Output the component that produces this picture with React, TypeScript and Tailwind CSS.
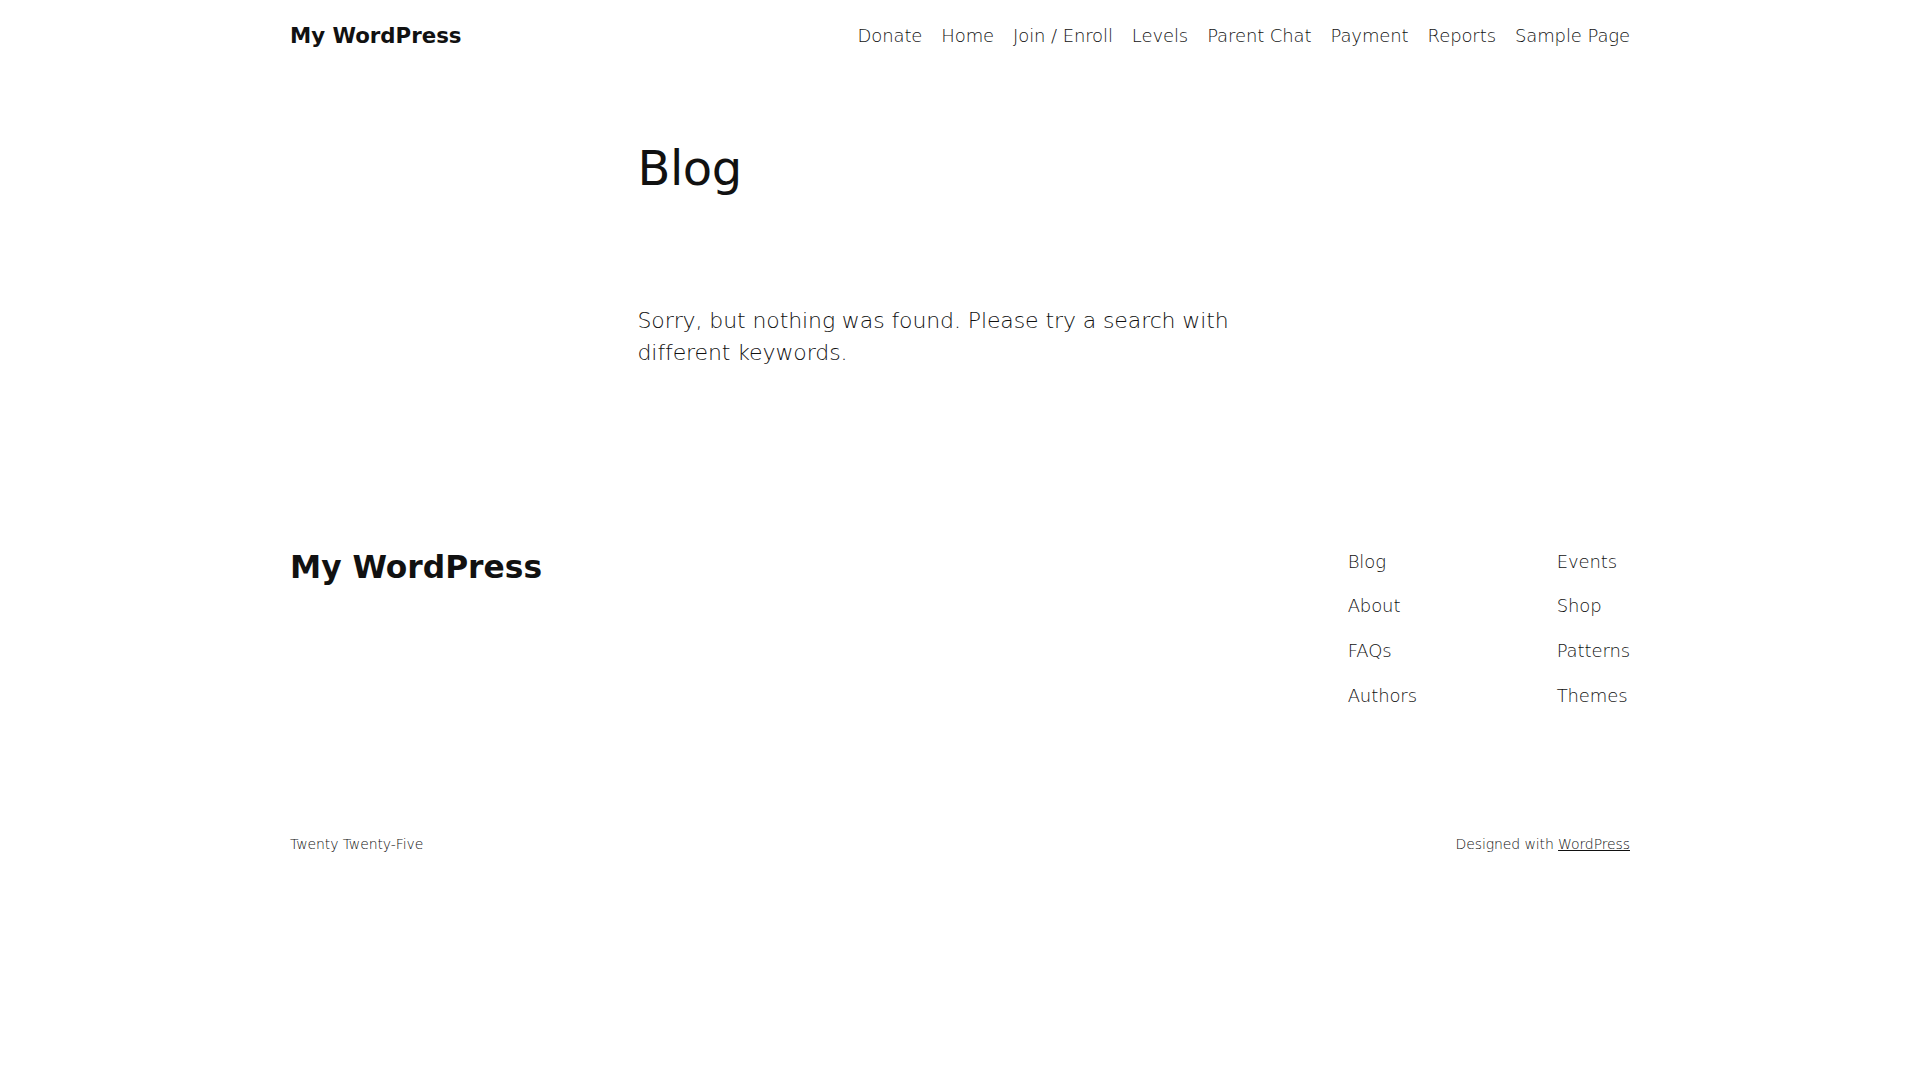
export default function App() {
  const nav = ["Donate", "Home", "Join / Enroll", "Levels", "Parent Chat", "Payment", "Reports", "Sample Page"];
  const col1 = ["Blog", "About", "FAQs", "Authors"];
  const col2 = ["Events", "Shop", "Patterns", "Themes"];
  return (
    <div className="min-h-screen bg-white text-[#111111] font-['DejaVu_Sans',sans-serif]">
      <header className="mx-auto flex h-[72px] w-[1340px] items-center justify-between">
        <a className="text-[21.3px] font-bold leading-[1.4]">My WordPress</a>
        <nav className="flex gap-[19px] text-[18px] font-light leading-[1.4] tracking-[-0.1px]">
          {nav.map((n) => (
            <a key={n}>{n}</a>
          ))}
        </nav>
      </header>
      <main className="mx-auto w-[645px] pt-[68px]">
        <h1 className="text-[48px] font-normal leading-[1.2] tracking-[-0.5px]">Blog</h1>
        <p className="mt-[107px] text-[22px] font-light leading-[32px] tracking-[-0.1px]">
          Sorry, but nothing was found. Please try a search with different keywords.
        </p>
      </main>
      <footer className="mx-auto w-[1340px] pt-[180px]">
        <div className="flex items-start justify-between">
          <div className="text-[31.3px] font-bold leading-[1.2]">My WordPress</div>
          <div className="flex text-[18px] font-light leading-[1.4] tracking-[-0.1px]">
            <div className="flex w-[209px] flex-col gap-[19.5px]">
              {col1.map((n) => (
                <a key={n}>{n}</a>
              ))}
            </div>
            <div className="flex flex-col gap-[19.5px]">
              {col2.map((n) => (
                <a key={n}>{n}</a>
              ))}
            </div>
          </div>
        </div>
        <div className="mt-[127px] flex justify-between text-[14px] font-light leading-[1.4] tracking-[-0.1px]">
          <span>Twenty Twenty-Five</span>
          <span>
            Designed with <a className="underline">WordPress</a>
          </span>
        </div>
      </footer>
    </div>
  );
}
